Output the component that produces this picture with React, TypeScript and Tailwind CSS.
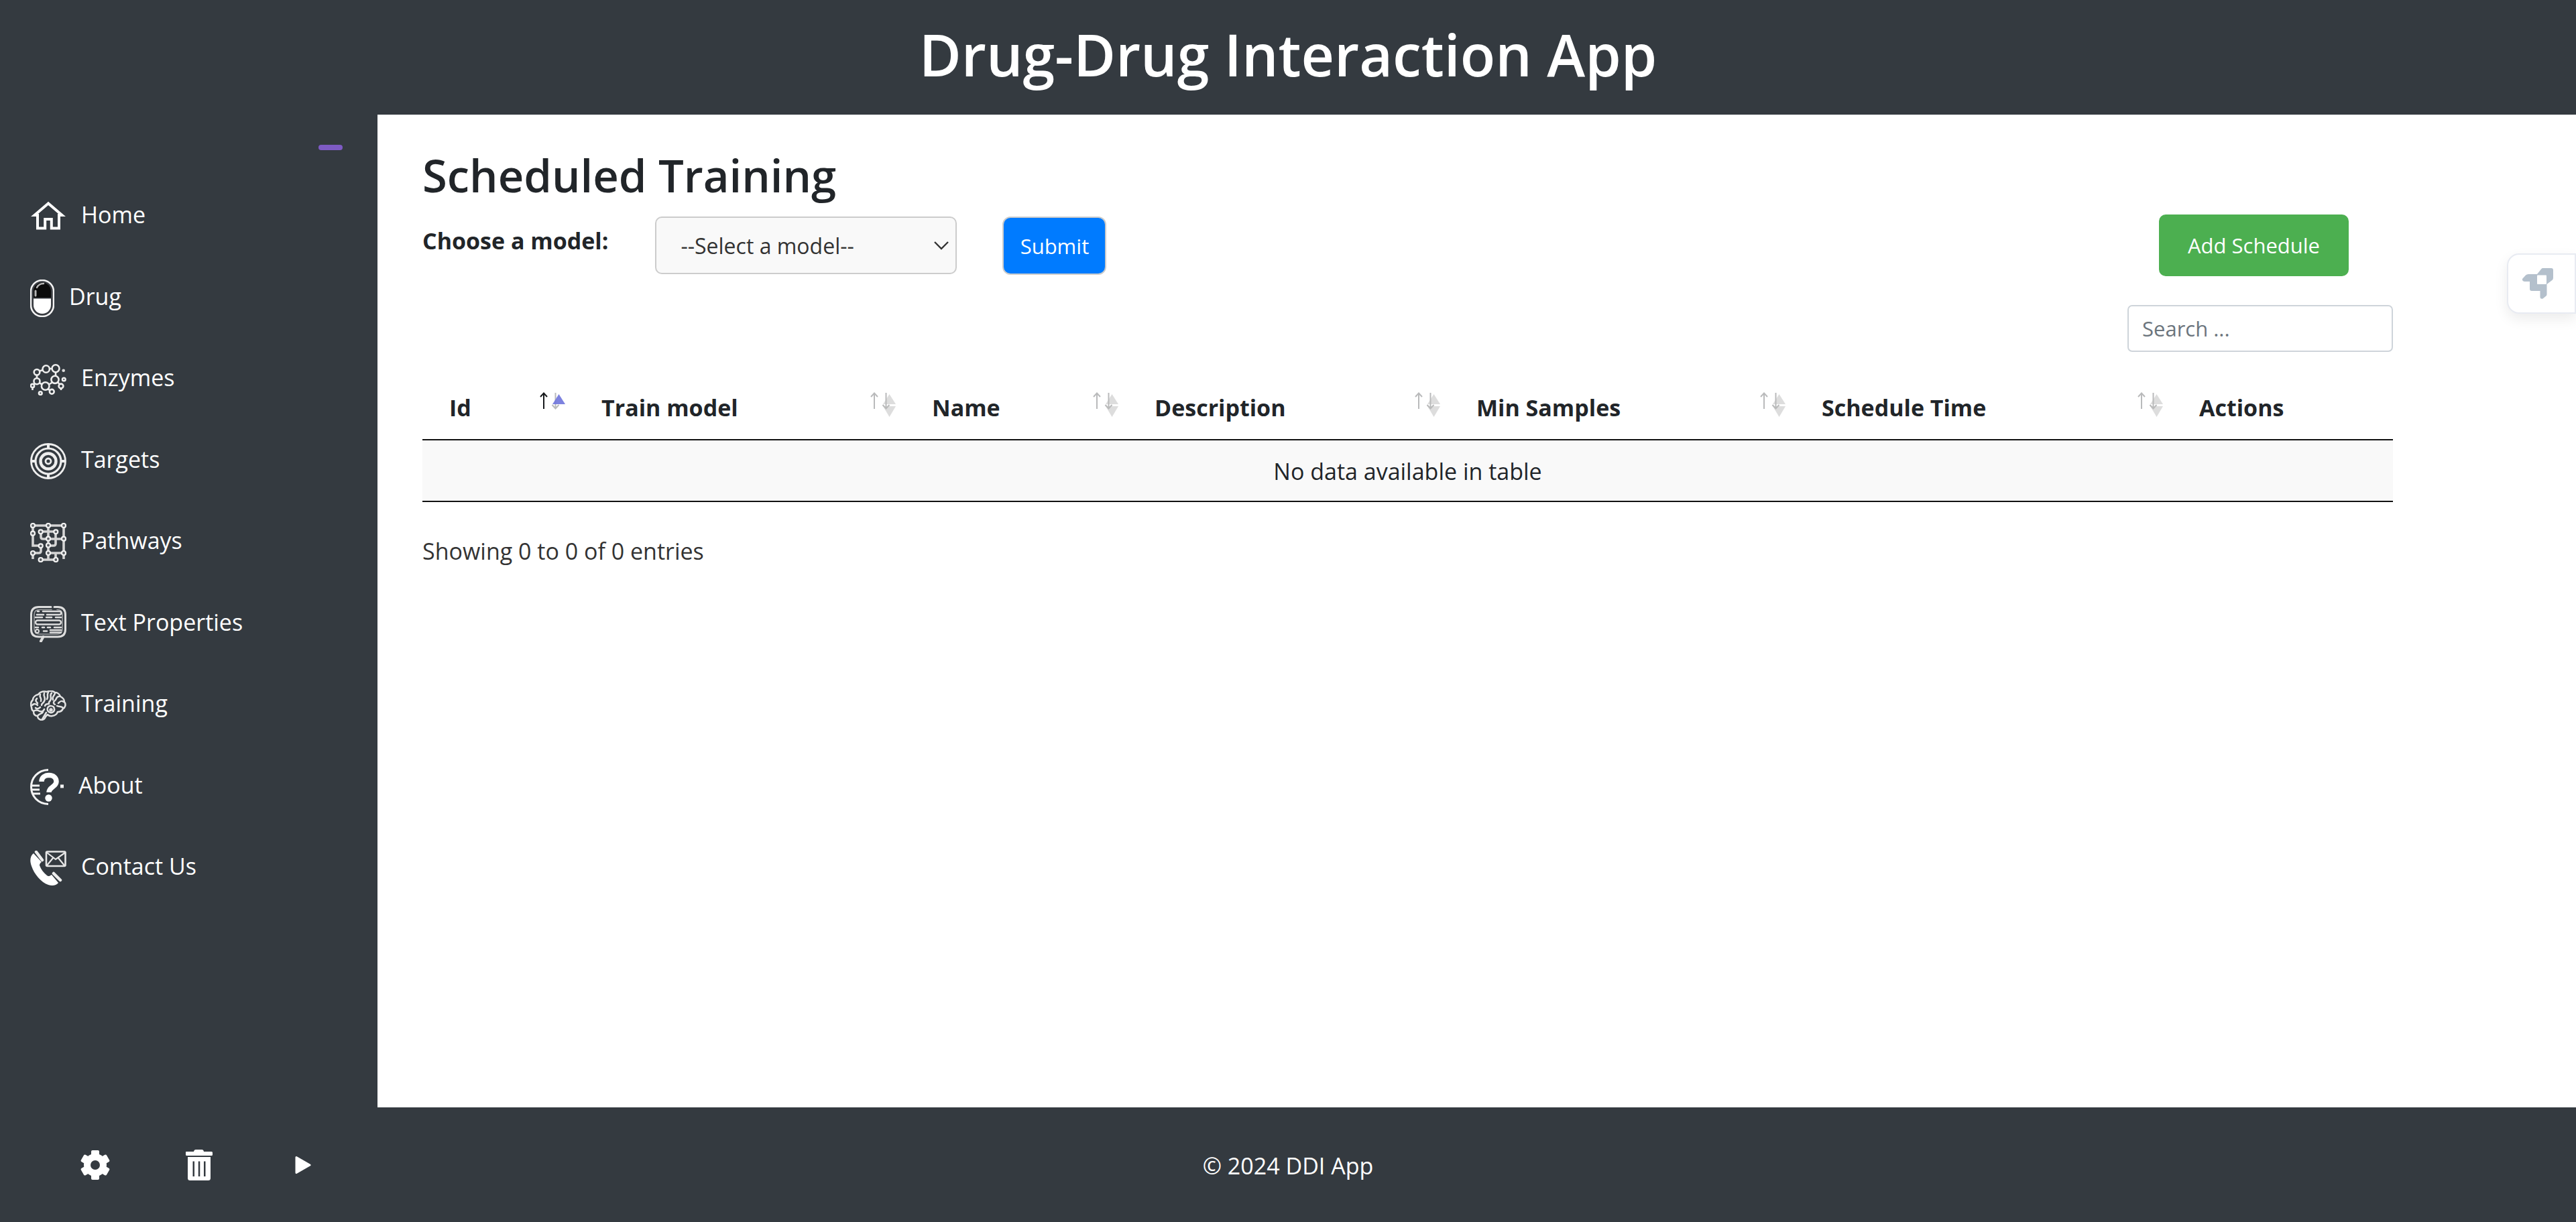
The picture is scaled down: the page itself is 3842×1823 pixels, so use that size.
import type { ReactNode } from "react";

function HomeIcon() {
  return (
    <svg width="54" height="54" viewBox="0 0 54 54" fill="none" stroke="#fff" strokeWidth="4" aria-hidden="true">
      <path d="M27 7.500 6.500 25H11v19.500h11.200V31h9.600v13.500H43V25h4.500Z" />
    </svg>
  );
}

function DrugIcon() {
  return (
    <svg width="36" height="56" viewBox="0 0 36 56" fill="none" aria-hidden="true">
      <rect x="1" y="1" width="34" height="54" rx="17" fill="#3a3d42" stroke="#f4f4f4" strokeWidth="2.500" />
      <path d="M5 27V17.500a13 13 0 0 1 26 0V27Z" fill="#0b0b0b" />
      <path d="M5 28.500h26V38a13 13 0 0 1-26 0Z" fill="#fff" />
      <path d="M8 17v7" stroke="#b5b5b5" strokeWidth="3" strokeLinecap="round" />
      <path d="M10 12c2-4 5-6 10-6" stroke="#b5b5b5" strokeWidth="2.500" strokeLinecap="round" />
    </svg>
  );
}

function EnzymesIcon() {
  return (
    <svg width="54" height="47" viewBox="0 0 54 47" fill="none" stroke="#eee" strokeWidth="2.600" aria-hidden="true">
      <circle cx="10" cy="12.300" r="4.300" />
      <circle cx="23.700" cy="7.500" r="5.200" />
      <circle cx="38" cy="6.800" r="5.500" />
      <circle cx="37" cy="23.300" r="5.600" />
      <circle cx="10" cy="25.700" r="4.500" />
      <circle cx="22.700" cy="33" r="5.800" />
      <circle cx="46" cy="33" r="3.400" />
      <circle cx="50.300" cy="23" r="2.300" />
      <circle cx="3.500" cy="32.500" r="2.600" />
      <circle cx="32.300" cy="41.300" r="3.400" />
      <circle cx="15.300" cy="43.500" r="2.300" />
      <circle cx="49.700" cy="9.700" r="2.300" fill="#ddd" stroke="none" />
      <path d="M14 10.500l5-1.500M29 7h3.500M38 12.500v5M10 17v4M14 28.500l4 2M28 30.500l5-3M41.500 27.500l2 2.500M7 29l-1.500 1.500M26 37.500l3.500 1.500M3.500 35v4M46 36v3" />
    </svg>
  );
}

function TargetsIcon() {
  return (
    <svg width="54" height="54" viewBox="0 0 54 54" fill="none" stroke="#eee" aria-hidden="true">
      <circle cx="27" cy="27" r="25.500" strokeWidth="2.800" />
      <circle cx="27" cy="27" r="19" strokeWidth="3.200" />
      <circle cx="27" cy="27" r="11.500" strokeWidth="4.400" />
      <circle cx="27" cy="27" r="4" strokeWidth="2.800" />
      <path d="M27 1v7M27 46v7M1 27h7M46 27h7" strokeWidth="4" />
    </svg>
  );
}

function PathwaysIcon() {
  const nodes = [
    [4, 4], [27, 4], [50, 4], [4, 15.7], [15.7, 13.3], [38.3, 13.3], [27, 23.7], [50, 23.7],
    [27, 33.5], [15.7, 34.3], [4, 45], [27, 45], [50, 45], [15.7, 55], [38.3, 55],
  ];
  return (
    <svg width="54" height="59" viewBox="0 0 54 59" fill="none" aria-hidden="true">
      <path
        d="M4 4h46M4 4v30h12v8q0 3-3 3H4v9M16 13h22v18q0 3-3 3h-8M16 13v8q0 3 3 3h31M27 4v51M50 4v50M27 45h23M16 55h22M38 45v10"
        stroke="#d4d4d4"
        strokeWidth="3.600"
      />
      {nodes.map(([x, y]) => (
        <circle key={`${x}-${y}`} cx={x} cy={y} r="3" fill="#5a5e63" stroke="#f2f2f2" strokeWidth="2.200" />
      ))}
    </svg>
  );
}

function TextPropertiesIcon() {
  return (
    <svg width="54" height="54" viewBox="0 0 54 54" fill="none" stroke="#ddd" strokeLinecap="round" aria-hidden="true">
      <path d="M31 1.500H13Q1.500 1.500 1.500 13v22Q1.500 46 13 46h28q11.500 0 11.500-11V13Q52.500 1.500 41 1.500h-5" strokeWidth="3" />
      <path d="M32 5.500H14Q6 5.500 6 13v21q0 8 8 8h26q8 0 8-8V13q0-7.500-8-7.500" strokeWidth="1.600" opacity=".6" />
      <path d="M19.500 46 16 52.500" strokeWidth="4" />
      <path d="M11 8h2M19 8h24q3.500 0 3.500 2.500T43 13H25M10 13h10M8 17h10M24 17h8M38 17h8" strokeWidth="2.600" />
      <rect x="8" y="21.500" width="38" height="6" rx="3" strokeWidth="2.400" />
      <path d="M8 32h4M18 32h3M26 32h4M36 32h10M25 37.500h-5M30 39.500h16M30 36h16" strokeWidth="2.600" />
      <circle cx="10.500" cy="37.500" r="2.500" strokeWidth="2" />
    </svg>
  );
}

function BrainIcon() {
  return (
    <svg width="54" height="45" viewBox="0 0 54 45" fill="none" stroke="#e2e2e2" strokeWidth="2.500" strokeLinecap="round" strokeLinejoin="round" aria-hidden="true">
      <path d="M2 25C0 20 2 16 4 14c0-4 4-7 8-8 3-4 8-5 13-4 4-2 9-1 12 1 4 0 7 3 8 6 4 2 6 5 6 8 3 4 1 9-2 10-1 3-4 5-8 5-1 3-4 6-8 6-4 1-6-1-7-2l-3 3c-1 4-4 5-7 5-3-1-5-3-5-6-4 0-6-3-6-7-2-1-3-4-3-6Z" />
      <path d="M3 22c3-3 6-2 8 0M5 31c3-2 6-2 9 0 3 1 6 0 7-3M10 12c-3 3-1 5 1 7M15 6c-2 5 3 5 1 10M21 4c-2 5 3 7 0 12-1 3-4 3-4 6M27 3c-3 4 1 6-2 10M32 4c-4 4 1 6-2 11-2 2-3 3-2 5M37 4c-1 5-5 5-3 10M43 9c-5 0-3 5-7 7-2 2-1 4 1 5M50 17c-4-3-6 0-8 2M49 26c-3-3-6-1-9-3M12 37c3-3 6-2 7-5M8 26c2 2 5 1 7-1" />
      <path d="M26 26c2-4 9-4 10 1 1 4-3 7-6 6-4-1-5-4-4-7ZM22 23c1-3 3-3 6-3M18 43l6-10" />
      <circle cx="31" cy="29" r="1.500" />
    </svg>
  );
}

function AboutIcon() {
  return (
    <svg width="50" height="54" viewBox="0 0 50 54" fill="none" stroke="#f4f4f4" aria-hidden="true">
      <path d="M27 1.500C11 2 1.500 14 1.500 27S11 52 27 52.500" strokeWidth="3" />
      <path d="M1 25h13M1 31h13M3 37h12" strokeWidth="3" />
      <path d="M17 19c0-6 5-9.500 11-9.500 7 0 11 4 11 9.500 0 8-11 8-11 16" strokeWidth="7.500" stroke="#fff" />
      <circle cx="27.500" cy="43.500" r="5.200" fill="#fff" stroke="none" />
      <path d="M45 26h5" strokeWidth="5" />
    </svg>
  );
}

function ContactIcon() {
  return (
    <svg width="54" height="52" viewBox="0 0 54 52" fill="none" aria-hidden="true">
      <path d="M5 4C0 8-1 15 2 23c4 12 14 24 25 28 6 2 12 1 15-3L32 36c-3 2-5 3-7 1-5-4-9-9-11-15 0-2 1-4 3-5Z" fill="#fff" />
      <path d="m9 2 9 12M35 34l10 10" stroke="#eee" strokeWidth="4.500" strokeLinecap="round" />
      <rect x="24" y="1.500" width="28.500" height="21.500" rx="1.500" stroke="#e8e8e8" strokeWidth="2.600" />
      <path d="m25 3 13 10L52 3M25 22l9-11M51 22l-9-11" stroke="#e8e8e8" strokeWidth="2.200" />
    </svg>
  );
}

function GearIcon() {
  return (
    <svg width="44" height="46" viewBox="0 0 44 46" aria-hidden="true">
      <g fill="#fff" transform="translate(22 23)">
        <rect x="-6" y="-22" width="12" height="44" rx="2" />
        <rect x="-6" y="-22" width="12" height="44" rx="2" transform="rotate(60)" />
        <rect x="-6" y="-22" width="12" height="44" rx="2" transform="rotate(120)" />
        <circle r="17" />
        <circle r="7" fill="#343a40" />
      </g>
    </svg>
  );
}

function TrashIcon() {
  return (
    <svg width="42" height="46" viewBox="0 0 42 46" fill="#fff" aria-hidden="true">
      <path d="M1.500 3H13q.5-3 3-3h9q2.500 0 3 3h11.500Q41 3 41 4.500v3Q41 9 39.500 9h-37Q1 9 1 7.500v-3Q1 3 1.500 3Z" />
      <path
        fillRule="evenodd"
        d="M4 11h34v31.500q0 3.500-3.500 3.500h-27Q4 46 4 42.500ZM11.500 17.500v22.500h2.500V17.500ZM19.800 17.500v22.500h2.500V17.500ZM28 17.500v22.500h2.500V17.500Z"
      />
    </svg>
  );
}

function PlayIcon() {
  return (
    <svg width="24" height="28" viewBox="0 0 24 28" aria-hidden="true">
      <path d="M2 2.500v23L22 14Z" fill="#fff" stroke="#fff" strokeWidth="3" strokeLinejoin="round" />
    </svg>
  );
}

function RocketIcon() {
  return (
    <svg width="46" height="46" viewBox="0 0 46 46" fill="#b4c0cc" aria-hidden="true">
      <path
        fillRule="evenodd"
        d="M30 0h13q3 0 3 3v11q0 2-1 3.500L36.500 24v15q0 1.500-1 2.500l-5 4q-3.500 1-4-2V34H14q-3 0-3-3V20H3q-4-1-3-4l5-5.500Q6.500 9 9 9h13l6-7.500Q29 0 30 0ZM23 10.500q-1 0-1 1V23q0 1 1 1h12q1 0 1-1V11.500q0-1-1-1Z"
      />
    </svg>
  );
}

function SortIcon({ ascending = false }: { ascending?: boolean }) {
  return (
    <svg width="38" height="38" viewBox="0 0 38 38" fill="none" strokeWidth="2" aria-hidden="true">
      <g stroke={ascending ? "#16181b" : "#b9babb"}>
        <path d="M6 25V2M1 7l5-5.500L11 7" />
      </g>
      <path d="M23.500 1v23M18.500 19l5 5.500 5-5.500" stroke="#b9babb" />
      <path d="M28.500 3 38 18H19Z" fill={ascending ? "#6f74dc" : "#bbb"} opacity={ascending ? ".9" : ".5"} />
      {!ascending && <path d="M19 21h19l-9.500 16Z" fill="#bbb" opacity=".5" />}
    </svg>
  );
}

const navItems: { label: string; icon: ReactNode }[] = [
  { label: "Home", icon: <HomeIcon /> },
  { label: "Drug", icon: <DrugIcon /> },
  { label: "Enzymes", icon: <EnzymesIcon /> },
  { label: "Targets", icon: <TargetsIcon /> },
  { label: "Pathways", icon: <PathwaysIcon /> },
  { label: "Text Properties", icon: <TextPropertiesIcon /> },
  { label: "Training", icon: <BrainIcon /> },
  { label: "About", icon: <AboutIcon /> },
  { label: "Contact Us", icon: <ContactIcon /> },
];

const columns = [
  { label: "Id", width: "w-[227px]", ascending: true },
  { label: "Train model", width: "w-[493px]" },
  { label: "Name", width: "w-[332px]" },
  { label: "Description", width: "w-[480px]" },
  { label: "Min Samples", width: "w-[515px]" },
  { label: "Schedule Time", width: "w-[563px]" },
  { label: "Actions", width: "w-[329px]", fixed: true },
];

export default function App() {
  return (
    <div className="flex min-h-screen flex-col bg-[#343a40] font-['Open_Sans','Noto_Sans',sans-serif] text-[34px] leading-[54px] text-[#212529]">
      <header className="flex justify-center pt-[27px] pb-[36px] text-white">
        <h1 className="text-[86px] leading-[108px] font-semibold">Drug-Drug Interaction App</h1>
      </header>

      <div className="flex flex-1">
        <aside className="w-[563px] shrink-0 text-white">
          <div className="flex h-[91px] justify-end pt-[45px] pr-[52px]">
            <button type="button" aria-label="Collapse sidebar" className="h-2 w-9 rounded-full bg-[#7e5bc4]" />
          </div>
          <nav>
            <ul>
              {navItems.map((item) => (
                <li key={item.label} className="h-[122px] even:h-[121px]">
                  <a href="#" className="flex h-full items-center gap-[22px] pl-[45px]">
                    {item.icon}
                    <span className="pb-[6px]">{item.label}</span>
                  </a>
                </li>
              ))}
            </ul>
          </nav>
        </aside>

        <main className="relative min-w-0 flex-1 bg-white pt-[46px] pr-[273px] pl-[67px]">
          <h2 className="text-[67px] leading-[88px] font-semibold">Scheduled Training</h2>

          <div className="flex items-start pt-[15px] pr-[66px]">
            <label htmlFor="model" className="pt-[12px] pr-[70px] text-[34px] leading-[54px] font-bold">
              Choose a model:
            </label>
            <div className="relative mt-[3px] mr-[68px] w-[450px]">
              <select
                id="model"
                className="h-[86px] w-full appearance-none rounded-[10px] border-2 border-[#ccc] bg-[#f9f9f9] px-9 pt-[2px] text-[32px] text-[#333]"
              >
                <option>--Select a model--</option>
              </select>
              <svg className="pointer-events-none absolute top-[37px] right-[12px]" width="22" height="14" viewBox="0 0 22 14" fill="none" aria-hidden="true">
                <path d="m1 1 10 10L21 1" stroke="#333" strokeWidth="2.400" />
              </svg>
            </div>
            <button
              type="button"
              className="mt-[3px] flex h-[87px] w-[155px] items-center justify-center rounded-[12px] border-2 border-[#ccc] bg-[#007bff] text-[31px] text-white"
            >
              Submit
            </button>
            <button
              type="button"
              className="ml-auto flex h-[92px] w-[283px] items-center justify-center rounded-[10px] bg-[#4caf50] text-[31px] text-white"
            >
              Add Schedule
            </button>
          </div>

          <div className="flex justify-end pt-[43px]">
            <input
              type="search"
              aria-label="Search"
              placeholder="Search ..."
              className="h-[70px] w-[396px] rounded-[7px] border-2 border-[#ced4da] bg-white px-5 text-[31px] placeholder:text-[#6c757d]"
            />
          </div>

          <table className="mt-[34px] w-full table-fixed border-collapse">
            <thead>
              <tr className="h-[97px] border-b-2 border-[#111]">
                {columns.map((column) => (
                  <th key={column.label} className={`${column.width} pt-[2px] pr-[14px] pl-[40px] text-left font-bold`}>
                    {column.fixed ? (
                      column.label
                    ) : (
                      <button type="button" className="flex w-full items-center justify-between whitespace-nowrap">
                        {column.label}
                        <span className="pb-[8px]">
                          <SortIcon ascending={column.ascending} />
                        </span>
                      </button>
                    )}
                  </th>
                ))}
              </tr>
            </thead>
            <tbody>
              <tr className="h-[92px] border-b-2 border-[#111] bg-[#f9f9f9]">
                <td colSpan={7} className="pt-[2px] text-center">
                  No data available in table
                </td>
              </tr>
            </tbody>
          </table>

          <p className="pt-[46px] text-[#333]">Showing 0 to 0 of 0 entries</p>

          <button
            type="button"
            aria-label="Open launcher"
            className="absolute top-[207px] right-0 flex h-[90px] w-[103px] items-center rounded-l-[18px] border-2 border-[#e8ebf2] bg-white pl-[21px] shadow-[0_8px_20px_rgba(0,0,0,0.08)]"
          >
            <RocketIcon />
          </button>
        </main>
      </div>

      <footer className="grid h-[171px] grid-cols-[1fr_auto_1fr] items-center text-white">
        <div className="flex items-center pl-[120px]">
          <button type="button" aria-label="Settings" className="mr-[112px]">
            <GearIcon />
          </button>
          <button type="button" aria-label="Delete" className="mr-[122px]">
            <TrashIcon />
          </button>
          <button type="button" aria-label="Play">
            <PlayIcon />
          </button>
        </div>
        <p className="pt-[2px]">© 2024 DDI App</p>
        <div />
      </footer>
    </div>
  );
}
